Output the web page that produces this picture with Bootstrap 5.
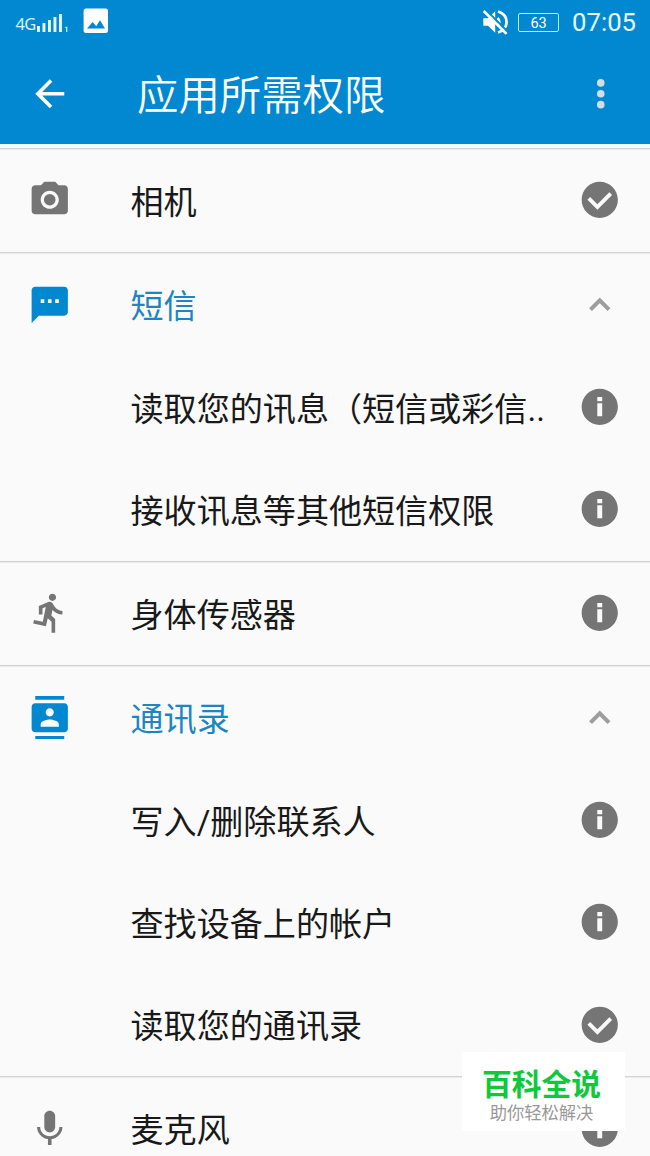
<!DOCTYPE html>
<html lang="zh-CN">
<head>
<meta charset="utf-8">
<meta name="viewport" content="width=device-width, initial-scale=1">
<title>应用所需权限</title>
<link href="https://cdn.jsdelivr.net/npm/bootstrap@5.3.0/dist/css/bootstrap.min.css" rel="stylesheet">
<style>
html, body { height: 100%; }
body { font-family: Roboto, "Noto Sans CJK SC", sans-serif; background: #fafafa; color: #191919; }
.screen { width: 650px; height: 1156px; }
.app-top { background: #0288d1; height: 144px; color: #fff; }
.status-bar { height: 44px; padding: 0 14px 0 15.5px; }
.net-label { font: 400 16.5px/1 "Noto Sans", sans-serif; letter-spacing: -.6px; color: #d8f3ff; }
.battery { width: 41px; height: 19px; border: 1px solid #b5ecff; border-radius: 2px; font-size: 14.5px; line-height: 19px; margin-right: 13px; }
.clock { font-size: 25.7px; line-height: 46px; color: #e6f8ff; }
.title-bar { height: 100px; padding: 0 28px; }
.title-text { font-size: 41.4px; line-height: 60px; font-weight: 350; margin: 4px 0 0 65.5px; }
.list-edge { height: 3.700px; background: #f1fbff; }
.perm-group { border-top: 1px solid #d2d2d2; box-shadow: inset 0 1px #ececec; padding-top: .8px; }
.perm-row { height: 102.35px; padding: 0 28.3px; }
.perm-name { font-size: 33.1px; line-height: 48px; margin-left: 58.7px; padding-top: 5px; white-space: nowrap; }
.lead-slot, .ic { width: 43.5px; height: 43.5px; flex: none; }
.perm-row .ic { margin-bottom: 1px; }
.ic { fill: currentColor; display: block; }
.tone-blue { color: #0288d1; }
.tone-name { color: #1c86c2; }
.tone-gray { color: #757575; }
.tone-light { color: #9e9e9e; }
.stamp { left: 462px; top: 1052px; width: 163px; height: 79px; background: #fff; text-align: center; padding-right: 4px; }
.stamp-title { font-size: 29.8px; line-height: 36px; font-weight: 700; color: #0fc83c; margin-top: 15px; }
.stamp-sub { font-size: 17.3px; line-height: 20px; color: #999; }
</style>
</head>
<body>
<svg class="d-none">
  <symbol id="check" viewBox="0 0 24 24"><path d="M12 2C6.480 2 2 6.480 2 12s4.480 10 10 10 10-4.480 10-10S17.520 2 12 2zm-1.300 15.500-5.500-5.500 1.500-1.500 4 4 6.600-6.600 1.500 1.500-8.100 8.100z"/></symbol>
  <symbol id="info" viewBox="0 0 24 24"><path d="M12 2C6.480 2 2 6.480 2 12s4.480 10 10 10 10-4.480 10-10S17.520 2 12 2zm1.350 15.300h-2.700v-7.200h2.700v7.200zm0-8.400h-2.700V6.600h2.700v2.300z"/></symbol>
  <symbol id="up" viewBox="0 0 24 24"><path d="M12 8l-5.900 5.900 1.600 1.600L12 11.200l4.300 4.300 1.600-1.600z"/></symbol>
</svg>
<main class="screen position-relative overflow-hidden d-flex flex-column">
  <header class="app-top flex-shrink-0">
    <div class="status-bar d-flex align-items-center">
      <span class="net-label mt-1">4G</span>
      <svg width="33" height="22" viewBox="0 0 33 22" fill="#e6f8ff"><path d="M1 15h2.900v6H1zM6.500 12h2.900v9H6.500zM12 9h2.900v12H12zM17.500 6h2.900v15h-2.900zM23 3h2.900v18H23z"/><path d="M28.500 16.700l1.500-1h1.400V21H30v-4z" opacity=".8"/></svg>
      <svg class="mb-1" style="margin-left:14px" width="26" height="28" viewBox="0 0 26 28"><rect x=".6" y="2.500" width="24.400" height="24.500" rx="2.500" fill="#fff"/><path d="M4 22.500l5.700-6.500 3.500 4.300 3.800-6 5 8.200z" fill="#0288d1"/></svg>
      <svg class="ms-auto" style="margin-right:9.500px" width="28" height="28" viewBox="0 0 28 28">
        <path d="M2.300 10.300H7l7.200-7v21.400l-7.200-7H2.300z" fill="#fff"/>
        <path d="M16.500 10q3.600 4 0 8M17 3.500c11.400 3.500 11.400 17.500 0 21" fill="none" stroke="#fff" stroke-width="2.700"/>
        <path d="M4.500 1.500l22 22" stroke="#0288d1" stroke-width="1.800"/><path d="M2.700 3l22.800 22.800" stroke="#fff" stroke-width="2.600"/>
      </svg>
      <span class="battery text-center">63</span>
      <span class="clock">07:05</span>
    </div>
    <div class="title-bar d-flex align-items-center">
      <svg class="ic" viewBox="0 0 24 24"><path d="M20 11H7.830l5.590-5.590L12 4l-8 8 8 8 1.410-1.410L7.830 13H20v-2z"/></svg>
      <h1 class="title-text">应用所需权限</h1>
      <svg class="ic ms-auto" viewBox="0 0 24 24" style="color:#d3dde2"><circle cx="12" cy="6" r="2.100"/><circle cx="12" cy="12" r="2.100"/><circle cx="12" cy="18" r="2.100"/></svg>
    </div>
  </header>
  <div class="list-edge flex-shrink-0"></div>

  <section class="perm-group">
    <div class="perm-row d-flex align-items-center">
      <svg class="ic tone-gray" viewBox="0 0 24 24"><circle cx="12" cy="12" r="3.200"/><path d="M9 2L7.170 4H4c-1.100 0-2 .9-2 2v12c0 1.100.9 2 2 2h16c1.100 0 2-.9 2-2V6c0-1.100-.9-2-2-2h-3.170L15 2H9zm3 15c-2.760 0-5-2.240-5-5s2.240-5 5-5 5 2.240 5 5-2.240 5-5 5z"/></svg>
      <span class="perm-name">相机</span>
      <svg class="ic tone-gray ms-auto"><use href="#check"/></svg>
    </div>
  </section>

  <section class="perm-group">
    <div class="perm-row d-flex align-items-center">
      <svg class="ic tone-blue" viewBox="0 0 24 24"><path d="M20 2H4c-1.100 0-2 .9-2 2v18l4-4h14c1.100 0 2-.9 2-2V4c0-1.100-.9-2-2-2zM9 11H7V9h2v2zm4 0h-2V9h2v2zm4 0h-2V9h2v2z"/></svg>
      <span class="perm-name tone-name">短信</span>
      <svg class="ic tone-light ms-auto"><use href="#up"/></svg>
    </div>
    <div class="perm-row d-flex align-items-center">
      <span class="lead-slot"></span><span class="perm-name">读取您的讯息（短信或彩信..</span>
      <svg class="ic tone-gray ms-auto"><use href="#info"/></svg>
    </div>
    <div class="perm-row d-flex align-items-center">
      <span class="lead-slot"></span><span class="perm-name">接收讯息等其他短信权限</span>
      <svg class="ic tone-gray ms-auto"><use href="#info"/></svg>
    </div>
  </section>

  <section class="perm-group">
    <div class="perm-row d-flex align-items-center">
      <svg class="ic tone-gray" viewBox="0 0 24 24"><path d="M13.490 5.480c1.100 0 2-.9 2-2s-.9-2-2-2-2 .9-2 2 .9 2 2 2zm-3.600 13.900l1-4.400 2.100 2v6h2v-7.500l-2.100-2 .6-3c1.300 1.500 3.300 2.500 5.500 2.500v-2c-1.900 0-3.500-1-4.300-2.400l-1-1.600c-.4-.6-1-1-1.700-1-.3 0-.5.100-.8.100l-5.200 2.200v4.700h2v-3.400l1.800-.7-1.600 8.100-4.900-1-.4 2 7 1.400z"/></svg>
      <span class="perm-name">身体传感器</span>
      <svg class="ic tone-gray ms-auto"><use href="#info"/></svg>
    </div>
  </section>

  <section class="perm-group">
    <div class="perm-row d-flex align-items-center">
      <svg class="ic tone-blue" viewBox="0 0 24 24"><path d="M20 0H4v2h16V0zM4 24h16v-2H4v2zM20 4H4c-1.100 0-2 .9-2 2v12c0 1.100.9 2 2 2h16c1.100 0 2-.9 2-2V6c0-1.100-.9-2-2-2zm-8 2.750c1.240 0 2.250 1.010 2.250 2.250s-1.010 2.250-2.250 2.250S9.750 10.240 9.750 9 10.760 6.750 12 6.750zM17 17H7v-1.500c0-1.670 3.330-2.500 5-2.500s5 .83 5 2.500V17z"/></svg>
      <span class="perm-name tone-name">通讯录</span>
      <svg class="ic tone-light ms-auto"><use href="#up"/></svg>
    </div>
    <div class="perm-row d-flex align-items-center">
      <span class="lead-slot"></span><span class="perm-name">写入/删除联系人</span>
      <svg class="ic tone-gray ms-auto"><use href="#info"/></svg>
    </div>
    <div class="perm-row d-flex align-items-center">
      <span class="lead-slot"></span><span class="perm-name">查找设备上的帐户</span>
      <svg class="ic tone-gray ms-auto"><use href="#info"/></svg>
    </div>
    <div class="perm-row d-flex align-items-center">
      <span class="lead-slot"></span><span class="perm-name">读取您的通讯录</span>
      <svg class="ic tone-gray ms-auto"><use href="#check"/></svg>
    </div>
  </section>

  <section class="perm-group">
    <div class="perm-row d-flex align-items-center">
      <svg class="ic tone-gray" viewBox="0 0 24 24"><path d="M12 14c1.660 0 2.990-1.340 2.990-3L15 5c0-1.660-1.340-3-3-3S9 3.340 9 5v6c0 1.660 1.340 3 3 3zm5.300-3c0 3-2.540 5.100-5.300 5.100S6.700 14 6.700 11H5c0 3.410 2.720 6.230 6 6.720V21h2v-3.280c3.280-.48 6-3.300 6-6.720h-1.700z"/></svg>
      <span class="perm-name">麦克风</span>
      <svg class="ic tone-gray ms-auto"><use href="#info"/></svg>
    </div>
  </section>

  <aside class="stamp position-absolute">
    <div class="stamp-title">百科全说</div>
    <div class="stamp-sub">助你轻松解决</div>
  </aside>
</main>
<script src="https://cdn.jsdelivr.net/npm/bootstrap@5.3.0/dist/js/bootstrap.bundle.min.js"></script>
</body>
</html>
